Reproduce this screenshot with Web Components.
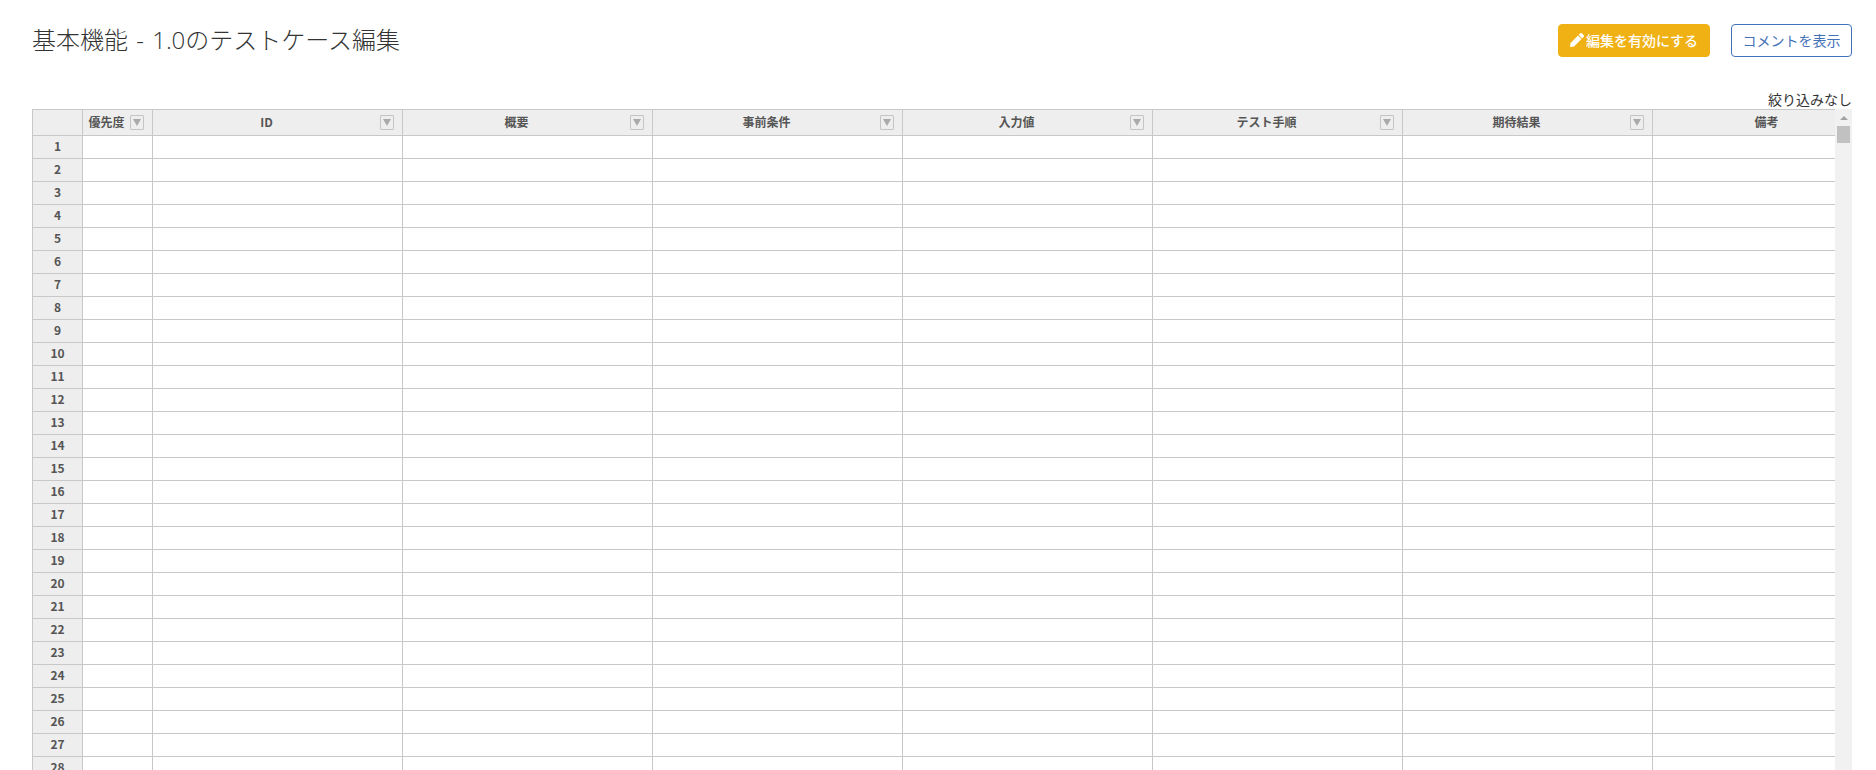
<!DOCTYPE html>
<html lang="ja">
<head>
<meta charset="utf-8">
<title>基本機能 - 1.0のテストケース編集</title>
<style>
  html, body {
    margin: 0;
    height: 100%;
    overflow: hidden;
    background: #fff;
    font-family: "Noto Sans CJK JP", "Noto Sans", sans-serif;
    color: #333;
  }
</style>
</head>
<body>
<test-case-page>
  <span slot="title">基本機能 - 1.0のテストケース編集</span>
</test-case-page>

<script>
class ActionButton extends HTMLElement {
  constructor() {
    super();
    this.attachShadow({mode: 'open'});
    this.render();
  }

  render() {
    const icon = this.getAttribute('icon') === 'pencil'
      ? `<svg viewBox="0 0 512 512" width="14" height="14" aria-hidden="true">
          <path fill="currentColor" d="M497.9 142.1l-46.1 46.1c-4.7 4.7-12.3 4.7-17 0l-111-111c-4.7-4.7-4.7-12.3 0-17l46.1-46.1c18.7-18.7 49.1-18.7 67.9 0l60.1 60.1c18.8 18.7 18.8 49.1 0 67.9zM284.2 99.8L21.6 362.4.4 483.9c-2.9 16.4 11.4 30.6 27.8 27.8l121.5-21.3 262.6-262.6c4.7-4.7 4.7-12.3 0-17l-111-111c-4.8-4.7-12.4-4.7-17.1 0z"/>
        </svg>`
      : '';

    this.shadowRoot.innerHTML = `
      <style>
        :host {
          display: inline-flex;
          box-sizing: border-box;
          height: 33px;
          padding-bottom: 2px;
          align-items: center;
          justify-content: center;
          gap: 2px;
          border-radius: 4px;
          border: 1px solid #4472b8;
          color: #4472b8;
          background: #fff;
          font-size: 14px;
          line-height: 1;
          cursor: pointer;
        }
        :host([variant="warning"]) {
          border-color: #f0b114;
          background: #f0b114;
          color: #fff;
          font-weight: 500;
        }
        svg { display: block; margin-top: 1px; }
      </style>
      ${icon}<slot></slot>
    `;
  }
}
customElements.define('action-button', ActionButton);

class FilterButton extends HTMLElement {
  constructor() {
    super();
    this.attachShadow({mode: 'open'});
    this.shadowRoot.innerHTML = `
      <style>
        :host {
          display: flex;
          position: absolute;
          right: 8px;
          top: 5px;
          box-sizing: border-box;
          width: 14px;
          height: 15px;
          align-items: center;
          justify-content: center;
          border: 1px solid #c4c4c4;
          border-radius: 1px;
          background: #eee;
        }
        i {
          width: 0;
          height: 0;
          border-left: 4px solid transparent;
          border-right: 4px solid transparent;
          border-top: 7px solid #aaa;
        }
      </style>
      <i></i>
    `;
  }
}
customElements.define('filter-button', FilterButton);

class GridScrollbar extends HTMLElement {
  constructor() {
    super();
    this.attachShadow({mode: 'open'});
    this.shadowRoot.innerHTML = `
      <style>
        :host {
          display: flex;
          flex: 0 0 17px;
          flex-direction: column;
          align-items: center;
          background: #f1f1f1;
        }
        .arrow {
          width: 0;
          height: 0;
          margin-top: 7px;
          border-left: 4px solid transparent;
          border-right: 4px solid transparent;
          border-bottom: 4px solid #a3a3a3;
        }
        .thumb {
          width: 13px;
          height: 17px;
          margin-top: 6px;
          background: #c1c1c1;
        }
      </style>
      <div class="arrow"></div>
      <div class="thumb"></div>
    `;
  }
}
customElements.define('grid-scrollbar', GridScrollbar);

class TestGrid extends HTMLElement {
  constructor() {
    super();
    this.attachShadow({mode: 'open'});
    this.render();
  }

  render() {
    const columns = ['優先度', 'ID', '概要', '事前条件', '入力値', 'テスト手順', '期待結果', '備考'];
    const rowCount = 28;

    const headerCells = columns
      .map((name) => `<div class="cell head"><span>${name}</span><filter-button></filter-button></div>`)
      .join('');

    let rows = '';
    for (let i = 1; i <= rowCount; i++) {
      rows += `<div class="cell num">${i}</div>` + columns.map(() => '<div class="cell"></div>').join('');
    }

    this.shadowRoot.innerHTML = `
      <style>
        :host {
          display: flex;
          height: 661px;
          overflow: hidden;
        }
        .viewport {
          flex: 1;
          min-width: 0;
          overflow: hidden;
        }
        .table {
          display: grid;
          grid-template-columns: 51px 70px repeat(7, 250px);
          grid-template-rows: 27px;
          grid-auto-rows: 23px;
          width: max-content;
        }
        .cell {
          box-sizing: border-box;
          position: relative;
          border-right: 1px solid #c8c8c8;
          border-bottom: 1px solid #c8c8c8;
          background: #fff;
        }
        .head, .num, .corner {
          display: flex;
          align-items: center;
          justify-content: center;
          padding-bottom: 2px;
          background: #eee;
          color: #555;
          font-size: 12px;
          font-weight: 700;
        }
        .num { padding-bottom: 4px; }
        .head, .corner { border-top: 1px solid #c8c8c8; }
        .head span { margin-right: 22px; }
        .num, .corner { border-left: 1px solid #c8c8c8; }
      </style>
      <div class="viewport">
        <div class="table">
          <div class="cell corner"></div>
          ${headerCells}
          ${rows}
        </div>
      </div>
      <grid-scrollbar></grid-scrollbar>
    `;
  }
}
customElements.define('test-grid', TestGrid);

class TestCasePage extends HTMLElement {
  constructor() {
    super();
    this.attachShadow({mode: 'open'});
    this.shadowRoot.innerHTML = `
      <style>
        :host {
          display: block;
          padding: 24px 24px 0 32px;
        }
        header {
          display: flex;
          justify-content: space-between;
          align-items: flex-start;
          height: 66px;
        }
        h1 {
          margin: -1px 0 0;
          font-family: "Open Sans", "Noto Sans CJK JP", sans-serif;
          font-size: 24px;
          font-weight: 300;
          word-spacing: 2px;
          line-height: 33px;
          color: #333;
        }
        .actions {
          display: flex;
          gap: 21px;
        }
        .edit { width: 152px; }
        .comment { width: 121px; }
        .filter-state {
          height: 19px;
          font-size: 14px;
          line-height: 18px;
          text-align: right;
          color: #333;
        }
      </style>
      <header>
        <h1><slot name="title"></slot></h1>
        <div class="actions">
          <action-button class="edit" variant="warning" icon="pencil">編集を有効にする</action-button>
          <action-button class="comment">コメントを表示</action-button>
        </div>
      </header>
      <div class="filter-state">絞り込みなし</div>
      <test-grid></test-grid>
    `;
  }
}
customElements.define('test-case-page', TestCasePage);
</script>
</body>
</html>
